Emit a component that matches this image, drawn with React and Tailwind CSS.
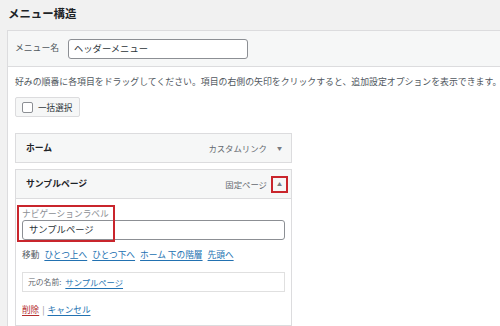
import React from 'react';

const jp = { fontFamily: '"Noto Sans CJK JP", "Noto Sans", sans-serif' };

function ItemHeader({ title, type, open }) {
  return (
    <div className="flex items-center h-[28px] pl-[10px] pr-[3px] bg-[#f6f7f7]">
      <span className="text-[8.8px] font-bold text-[#1d2327] leading-none">{title}</span>
      <span className="ml-auto text-[8.4px] text-[#646970] leading-none">{type}</span>
      <span
        className={
          'ml-[4px] w-[17px] h-[17px] flex items-center justify-center text-[5px] text-[#787c82] ' +
          (open ? 'border-2 border-[#c9252c]' : '')
        }
      >
        {open ? '▲' : '▼'}
      </span>
    </div>
  );
}

export default function App() {
  return (
    <div className="w-[500px] h-[326px] bg-[#f1f1f1] overflow-hidden" style={jp}>
      {/* title */}
      <div className="h-[30px] flex items-center pl-[8px] pb-[2px]">
        <h2 className="text-[11.4px] font-bold text-[#1d2327] leading-none">メニュー構造</h2>
      </div>

      <div className="ml-[7px] border border-r-0 border-[#dcdcde] bg-white h-[400px]">
        {/* menu name header */}
        <div className="h-[36px] flex items-center pl-[7px] bg-[#f6f7f7] border-b border-[#dcdcde]">
          <span className="text-[8.8px] text-[#50575e] leading-none">メニュー名</span>
          <div className="ml-[9px] w-[180px] h-[20px] border border-[#8c8f94] rounded-[3px] bg-white flex items-center pl-[5px]">
            <span className="text-[9.3px] text-[#2c3338] leading-none">ヘッダーメニュー</span>
          </div>
        </div>

        {/* body */}
        <div className="pl-[7px] pt-[9px]">
          <p className="text-[8.9px] leading-[12px] text-[#50575e] whitespace-nowrap">
            好みの順番に各項目をドラッグしてください。項目の右側の矢印をクリックすると、追加設定オプションを表示できます。
          </p>

          <div className="mt-[9px] w-[65px] h-[20px] flex items-center gap-[5px] pl-[6px] bg-[#f6f7f7] border border-[#dcdcde] rounded-[2px]">
            <span className="w-[11px] h-[11px] border border-[#8c8f94] rounded-[2px] bg-white" />
            <span className="text-[8.6px] text-[#2c3338] leading-none">一括選択</span>
          </div>

          {/* item: home */}
          <div className="mt-[16px] w-[277px] border border-[#dcdcde]">
            <ItemHeader title="ホーム" type="カスタムリンク" />
          </div>

          {/* item: sample page (open) */}
          <div className="mt-[6px] w-[277px] border border-[#dcdcde]">
            <ItemHeader title="サンプルページ" type="固定ページ" open />
            <div className="relative border-t border-[#dcdcde] px-[6px] pt-[9px] pb-[10px]">
              <div className="absolute left-[1px] top-[6px] w-[98px] h-[37px] border-2 border-[#c9252c]" />
              <div className="text-[8.7px] leading-[12px] text-[#8c8f94]">ナビゲーションラベル</div>
              <div className="w-full h-[20px] border border-[#8c8f94] rounded-[3px] bg-white flex items-center pl-[6px]">
                <span className="text-[9.3px] text-[#2c3338] leading-none">サンプルページ</span>
              </div>

              <div className="mt-[9px] flex items-center gap-[5px] text-[8.7px] leading-[12px]">
                <span className="text-[#50575e]">移動</span>
                <span className="text-[#2271b1] underline underline-offset-2">ひとつ上へ</span>
                <span className="text-[#2271b1] underline underline-offset-2">ひとつ下へ</span>
                <span className="text-[#2271b1] underline underline-offset-2">ホーム 下の階層</span>
                <span className="text-[#2271b1] underline underline-offset-2">先頭へ</span>
              </div>

              <div className="mt-[11px] h-[20px] border border-[#e0e0e0] flex items-center pl-[5px] gap-[4px]">
                <span className="text-[7.8px] text-[#646970] leading-none">元の名前:</span>
                <span className="text-[8.3px] text-[#2271b1] underline underline-offset-2 leading-none">サンプルページ</span>
              </div>

              <div className="mt-[11px] flex items-center gap-[3px] text-[8.6px] leading-[12px]">
                <span className="text-[#b32d2e] underline underline-offset-2">削除</span>
                <span className="text-[#8c8f94]">|</span>
                <span className="text-[#2271b1] underline underline-offset-2">キャンセル</span>
              </div>
            </div>
          </div>
        </div>
      </div>
    </div>
  );
}
